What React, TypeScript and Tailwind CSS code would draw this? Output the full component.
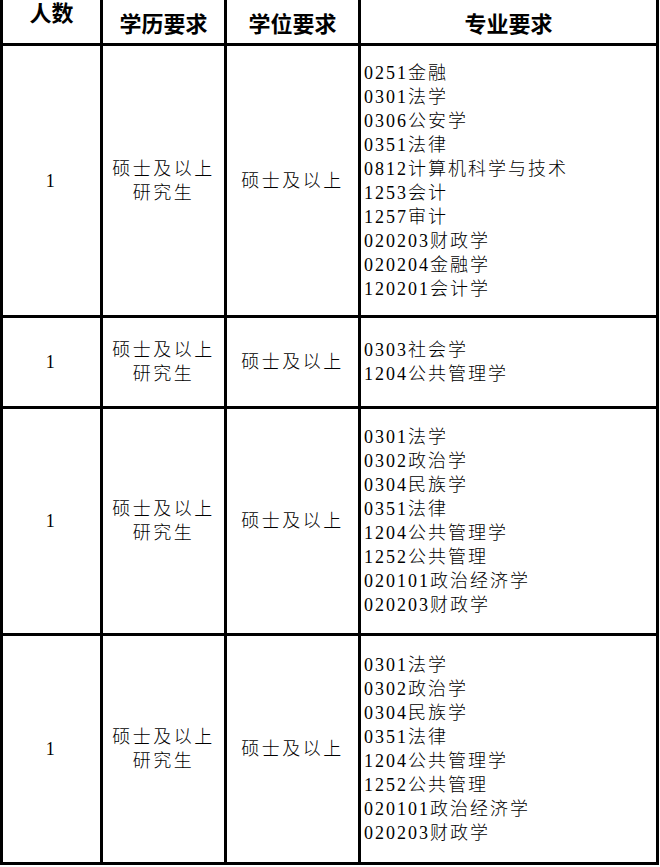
const rows = [
  {
    count: "1",
    majors: [
      "0251金融",
      "0301法学",
      "0306公安学",
      "0351法律",
      "0812计算机科学与技术",
      "1253会计",
      "1257审计",
      "020203财政学",
      "020204金融学",
      "120201会计学",
    ],
  },
  { count: "1", majors: ["0303社会学", "1204公共管理学"] },
  {
    count: "1",
    majors: [
      "0301法学",
      "0302政治学",
      "0304民族学",
      "0351法律",
      "1204公共管理学",
      "1252公共管理",
      "020101政治经济学",
      "020203财政学",
    ],
  },
  {
    count: "1",
    majors: [
      "0301法学",
      "0302政治学",
      "0304民族学",
      "0351法律",
      "1204公共管理学",
      "1252公共管理",
      "020101政治经济学",
      "020203财政学",
    ],
  },
];

const head = "bg-white flex items-center justify-center font-['Noto_Sans_CJK_SC',sans-serif] font-bold text-[22px] leading-[22px] text-black";
const cell = "bg-white flex items-center justify-center text-center font-['Liberation_Serif','Noto_Sans_CJK_SC',serif] font-light text-[18px] leading-[24px] tracking-[2.5px] text-black";

export default function App() {
  return (
    <div className="w-[660px] h-[867px] bg-white">
      <div className="w-[659px] bg-black px-[3px] pb-[3px] grid grid-cols-[97px_121px_131px_295px] grid-rows-[43px_269px_88px_224px_226px] gap-[3px]">
        <div className={head}>
          <span className="-mt-[22px]">人数</span>
        </div>
        <div className={head}>学历要求</div>
        <div className={head}>学位要求</div>
        <div className={head}>专业要求</div>
        {rows.map((r, i) => (
          <>
            <div key={`c${i}`} className={cell}>
              {r.count}
            </div>
            <div key={`e${i}`} className={cell}>
              <div>
                <div>硕士及以上</div>
                <div>研究生</div>
              </div>
            </div>
            <div key={`d${i}`} className={cell}>
              硕士及以上
            </div>
            <div
              key={`m${i}`}
              className="bg-white flex flex-col justify-center pl-[3px] font-['Liberation_Serif','Noto_Sans_CJK_SC',serif] font-light text-[18px] leading-[24px] tracking-[2px] text-black"
            >
              {r.majors.map((m) => (
                <div key={m}>{m}</div>
              ))}
            </div>
          </>
        ))}
      </div>
    </div>
  );
}
